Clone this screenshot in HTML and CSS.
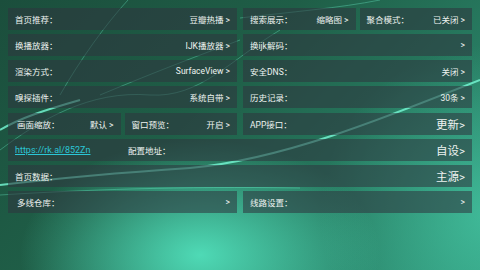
FILE: index.html
```html
<!DOCTYPE html>
<html>
<head>
    <link rel="stylesheet" href="styles.css">
</head>
<body>
    <svg class="waves" viewBox="0 0 480 270" preserveAspectRatio="none">
        <path d="M60 95 C 80 60, 105 25, 128 0" />
        <path d="M0 150 C 40 120, 90 90, 150 95 C 200 98, 230 60, 280 30" />
        <path d="M240 18 C 290 12, 340 8, 380 0" />
        <path class="bright" d="M0 185 C 60 178, 130 172, 190 168 C 280 160, 380 120, 480 80" />
        <path class="bright" d="M0 130 C 20 118, 45 110, 80 100" />
        <path d="M0 195 C 80 190, 180 186, 300 188" />
        <path d="M100 95 C 160 70, 200 55, 240 40" />
    </svg>

    <div class="settings">
        <!-- row 1 -->
        <div class="item">
            <span class="label">首页推荐：</span><span class="value">豆瓣热播 &gt;</span>
        </div>
        <div class="split">
            <div class="item"><span class="label">搜索展示：</span><span class="value">缩略图 &gt;</span></div>
            <div class="item"><span class="label">聚合模式：</span><span class="value">已关闭 &gt;</span></div>
        </div>

        <!-- row 2 -->
        <div class="item">
            <span class="label">换播放器：</span><span class="value">IJK播放器 &gt;</span>
        </div>
        <div class="item">
            <span class="label">换ijk解码：</span><span class="value">&gt;</span>
        </div>

        <!-- row 3 -->
        <div class="item">
            <span class="label">渲染方式：</span><span class="value">SurfaceView &gt;</span>
        </div>
        <div class="item">
            <span class="label">安全DNS：</span><span class="value">关闭 &gt;</span>
        </div>

        <!-- row 4 -->
        <div class="item">
            <span class="label">嗅探插件：</span><span class="value">系统自带 &gt;</span>
        </div>
        <div class="item">
            <span class="label">历史记录：</span><span class="value">30条 &gt;</span>
        </div>

        <!-- row 5 -->
        <div class="split">
            <div class="item inset"><span class="label">画面缩放：</span><span class="value">默认 &gt;</span></div>
            <div class="item"><span class="label">窗口预览：</span><span class="value">开启 &gt;</span></div>
        </div>
        <div class="item">
            <span class="label">APP接口：</span><span class="value big">更新&gt;</span>
        </div>

        <!-- row 6 -->
        <div class="item wide">
            <a class="link" href="#">https://rk.al/852Zn</a>
            <span class="label">配置地址：</span><span class="value big">自设&gt;</span>
        </div>

        <!-- row 7 -->
        <div class="item wide">
            <span class="label">首页数据：</span><span class="value big">主源&gt;</span>
        </div>

        <!-- row 8 -->
        <div class="item inset">
            <span class="label">多线仓库：</span><span class="value">&gt;</span>
        </div>
        <div class="item">
            <span class="label">线路设置：</span><span class="value">&gt;</span>
        </div>
    </div>
</body>
</html>
```

FILE: styles.css
```css
:root {
    --card: rgba(46, 54, 62, 0.56);
    --text: #eef3f0;
    --link: #2bc6d6;
}

html, body {
    margin: 0;
    width: 480px;
    height: 270px;
    overflow: hidden;
}

body {
    position: relative;
    background:
        radial-gradient(ellipse 180px 115px at 200px 255px, rgba(86, 236, 198, 0.85), rgba(86, 236, 198, 0) 100%),
        radial-gradient(ellipse 170px 170px at 490px 215px, rgba(72, 206, 170, 0.7), rgba(72, 206, 170, 0) 100%),
        linear-gradient(135deg, #1b4e3c 0%, #1f5e47 40%, #277a60 70%, #2e8f74 100%);
    color: var(--text);
    font-family: Roboto, "Noto Sans CJK SC", sans-serif;
    font-size: 8.5px;
}

.waves {
    position: absolute;
    top: 0;
    left: 0;
    width: 480px;
    height: 270px;
    z-index: 0;
}

.waves path {
    fill: none;
    stroke: rgba(110, 240, 205, 0.45);
    stroke-width: 0.8;
}

.waves path.bright {
    stroke: rgba(120, 250, 215, 0.8);
    stroke-width: 2;
}

.settings {
    position: relative;
    z-index: 1;
    display: grid;
    grid-template-columns: 1fr 1fr;
    grid-auto-rows: 22px;
    column-gap: 6px;
    row-gap: 4.25px;
    padding: 7.5px 8px 0 8px;
}

.split {
    display: grid;
    grid-template-columns: 1fr 1fr;
    column-gap: 4px;
}

.item {
    display: flex;
    align-items: center;
    padding: 0 7px;
    background: var(--card);
    white-space: nowrap;
}

.item.inset {
    padding-left: 9px;
}

.item.wide {
    grid-column: span 2;
}

.label {
    flex: none;
}

.value {
    margin-left: auto;
}

.value.big {
    font-size: 11.5px;
}

.link {
    width: 113px;
    flex: none;
    font-size: 9px;
    color: var(--link);
    text-decoration: underline;
}
```
